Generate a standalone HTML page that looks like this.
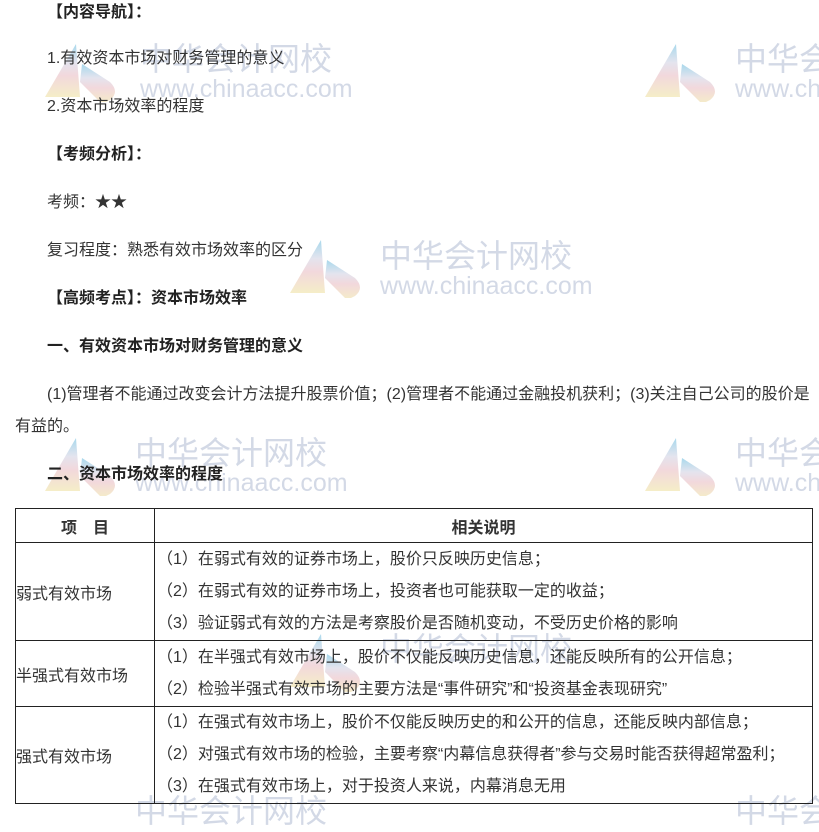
<!DOCTYPE html>
<html><head><meta charset="utf-8"><style>
body{margin:0;width:819px;height:810px;overflow:hidden;background:#fff;position:relative;font-family:"Liberation Sans","Noto Sans CJK SC",sans-serif;color:#333;font-size:16px}
.t{position:absolute;left:47px;white-space:nowrap;line-height:20px;z-index:1}
.b{font-weight:bold;color:#222}
.wm{position:absolute;color:#d3d9e6;white-space:nowrap;z-index:0}
.wm .c{font-size:32px;line-height:38px;font-family:"Noto Sans CJK SC",sans-serif}
.wm .u{font-size:25px;line-height:26px;margin-top:0px}
.lg{position:absolute;z-index:0}
table{position:absolute;left:15px;top:508px;width:798px;border-collapse:collapse;z-index:1;background:transparent}
td{border:1.5px solid #222;padding:0;vertical-align:middle;font-size:16px;color:#333}
td p{margin:0;line-height:32px;padding-left:2px;white-space:nowrap}
</style></head><body>
<svg width="0" height="0" style="position:absolute"><defs>
<linearGradient id="g" x1="0" y1="0" x2="0" y2="1"><stop offset="0" stop-color="#a8d8ec"/><stop offset=".35" stop-color="#e4e4ee"/><stop offset=".6" stop-color="#f2d8dc"/><stop offset="1" stop-color="#f5edc8"/></linearGradient></defs></svg>
<div class="wm" style="left:140px;top:38px"><div class="c">中华会计网校</div><div class="u">www.chinaacc.com</div></div>
<div class="wm" style="left:735px;top:38px"><div class="c">中华会计网校</div><div class="u">www.chinaacc.com</div></div>
<div class="wm" style="left:380px;top:235px"><div class="c">中华会计网校</div><div class="u">www.chinaacc.com</div></div>
<div class="wm" style="left:135px;top:432px"><div class="c">中华会计网校</div><div class="u">www.chinaacc.com</div></div>
<div class="wm" style="left:735px;top:432px"><div class="c">中华会计网校</div><div class="u">www.chinaacc.com</div></div>
<div class="wm" style="left:380px;top:628px"><div class="c">中华会计网校</div></div>
<div class="wm" style="left:135px;top:790px"><div class="c">中华会计网校</div></div>
<div class="wm" style="left:735px;top:790px"><div class="c">中华会计网校</div></div>
<svg class="lg" style="left:40px;top:42px" width="90" height="60"><path d="M36 2 L5 55 L40 55 Z" fill="url(#g)"/><path d="M42 22 L70 40 Q80 50 70 58 L62 62 L40 40 Z" fill="url(#g)"/></svg>
<svg class="lg" style="left:640px;top:42px" width="90" height="60"><path d="M36 2 L5 55 L40 55 Z" fill="url(#g)"/><path d="M42 22 L70 40 Q80 50 70 58 L62 62 L40 40 Z" fill="url(#g)"/></svg>
<svg class="lg" style="left:285px;top:238px" width="90" height="60"><path d="M36 2 L5 55 L40 55 Z" fill="url(#g)"/><path d="M42 22 L70 40 Q80 50 70 58 L62 62 L40 40 Z" fill="url(#g)"/></svg>
<svg class="lg" style="left:40px;top:436px" width="90" height="60"><path d="M36 2 L5 55 L40 55 Z" fill="url(#g)"/><path d="M42 22 L70 40 Q80 50 70 58 L62 62 L40 40 Z" fill="url(#g)"/></svg>
<svg class="lg" style="left:640px;top:436px" width="90" height="60"><path d="M36 2 L5 55 L40 55 Z" fill="url(#g)"/><path d="M42 22 L70 40 Q80 50 70 58 L62 62 L40 40 Z" fill="url(#g)"/></svg>
<svg class="lg" style="left:285px;top:632px" width="90" height="60"><path d="M36 2 L5 55 L40 55 Z" fill="url(#g)"/><path d="M42 22 L70 40 Q80 50 70 58 L62 62 L40 40 Z" fill="url(#g)"/></svg>

<div class="t b" style="top:3px">【内容导航】：</div>
<div class="t" style="top:49px">1.有效资本市场对财务管理的意义</div>
<div class="t" style="top:97px">2.资本市场效率的程度</div>
<div class="t b" style="top:145px">【考频分析】：</div>
<div class="t" style="top:193px">考频：★★</div>
<div class="t" style="top:241px">复习程度：熟悉有效市场效率的区分</div>
<div class="t b" style="top:289px">【高频考点】：资本市场效率</div>
<div class="t b" style="top:337px">一、有效资本市场对财务管理的意义</div>
<div class="t" style="top:385px">(1)管理者不能通过改变会计方法提升股票价值；(2)管理者不能通过金融投机获利；(3)关注自己公司的股价是</div>
<div class="t" style="top:417px;left:15px">有益的。</div>
<div class="t b" style="top:465px">二、资本市场效率的程度</div>

<table>
<tr style="height:34px"><td style="width:138px;text-align:center"><b>项　目</b></td><td style="text-align:center"><b>相关说明</b></td></tr>
<tr style="height:98px"><td>弱式有效市场</td><td><p>（1）在弱式有效的证券市场上，股价只反映历史信息；</p><p>（2）在弱式有效的证券市场上，投资者也可能获取一定的收益；</p><p>（3）验证弱式有效的方法是考察股价是否随机变动，不受历史价格的影响</p></td></tr>
<tr style="height:66px"><td>半强式有效市场</td><td><p>（1）在半强式有效市场上，股价不仅能反映历史信息，还能反映所有的公开信息；</p><p>（2）检验半强式有效市场的主要方法是“事件研究”和“投资基金表现研究”</p></td></tr>
<tr style="height:97px"><td>强式有效市场</td><td><p>（1）在强式有效市场上，股价不仅能反映历史的和公开的信息，还能反映内部信息；</p><p>（2）对强式有效市场的检验，主要考察“内幕信息获得者”参与交易时能否获得超常盈利；</p><p>（3）在强式有效市场上，对于投资人来说，内幕消息无用</p></td></tr>
</table>
</body></html>
